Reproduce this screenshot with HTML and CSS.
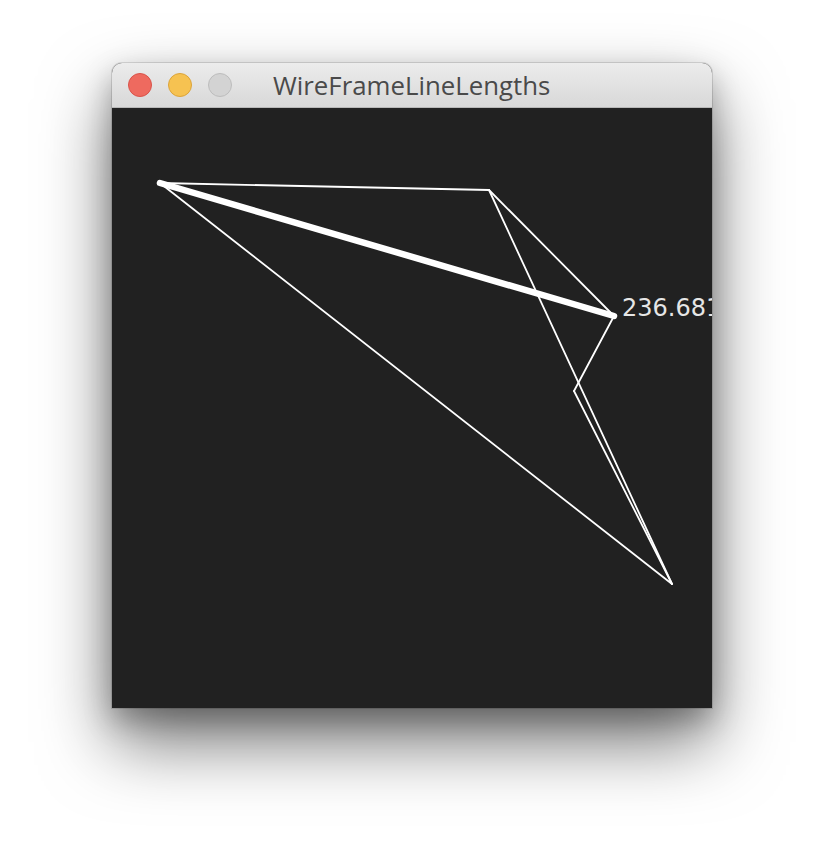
FILE: index.html
```html
<!DOCTYPE html>
<html>
<head>
<meta charset="utf-8">
<link rel="stylesheet" href="styles.css">
</head>
<body>
<div class="window">
  <div class="titlebar">
    <div class="lights">
      <span class="light red"></span>
      <span class="light yellow"></span>
      <span class="light grey"></span>
    </div>
    <div class="title">WireFrameLineLengths</div>
  </div>
  <svg class="canvas" width="600" height="600" viewBox="0 0 600 600">
    <rect width="600" height="600" fill="#212121"/>
    <g stroke="#ffffff" stroke-width="1.8" fill="none" stroke-linecap="round">
      <line x1="48" y1="75" x2="377" y2="82"/>
      <line x1="48" y1="75" x2="560" y2="476"/>
      <line x1="377" y1="82" x2="502" y2="208"/>
      <line x1="377" y1="82" x2="560" y2="476"/>
      <line x1="502" y1="208" x2="462" y2="283"/>
      <line x1="462" y1="283" x2="560" y2="476"/>
    </g>
    <line x1="48" y1="75" x2="502" y2="208" stroke="#ffffff" stroke-width="6.5" stroke-linecap="round"/>
    <text x="510" y="208" class="label">236.681</text>
  </svg>
</div>
</body>
</html>
```
FILE: styles.css
```css
html, body {
  margin: 0;
  padding: 0;
  background: #ffffff;
}
body {
  width: 824px;
  height: 868px;
  overflow: hidden;
  padding-top: 63px;
  padding-left: 112px;
  box-sizing: border-box;
}
.window {
  width: 600px;
  display: flex;
  flex-direction: column;
  border-radius: 10px 10px 0 0;
  box-shadow: 0 0 0 1px rgba(0,0,0,0.12), 0 34px 70px rgba(0,0,0,0.55), 0 12px 28px rgba(0,0,0,0.25);
  background: #212121;
}
.titlebar {
  height: 44px;
  border-radius: 10px 10px 0 0;
  background: linear-gradient(#ececec, #d8d8d8);
  border-bottom: 1px solid #b8b8b8;
  display: flex;
  align-items: center;
}
.lights {
  display: flex;
  gap: 16px;
  padding-left: 16px;
}
.light {
  width: 24px;
  height: 24px;
  border-radius: 50%;
  box-sizing: border-box;
}
.red { background: #ee6a5f; border: 1px solid #d9534a; }
.yellow { background: #f6c251; border: 1px solid #dca43a; }
.grey { background: #d3d3d3; border: 1px solid #bdbdbd; }
.title {
  margin-left: 41px;
  font-family: "Open Sans", "Liberation Sans", sans-serif;
  font-size: 25.8px;
  color: #4a4a4a;
}
.canvas {
  display: block;
}
.label {
  font-family: "DejaVu Sans", sans-serif;
  font-size: 24px;
  fill: #e6e6e6;
}
```
